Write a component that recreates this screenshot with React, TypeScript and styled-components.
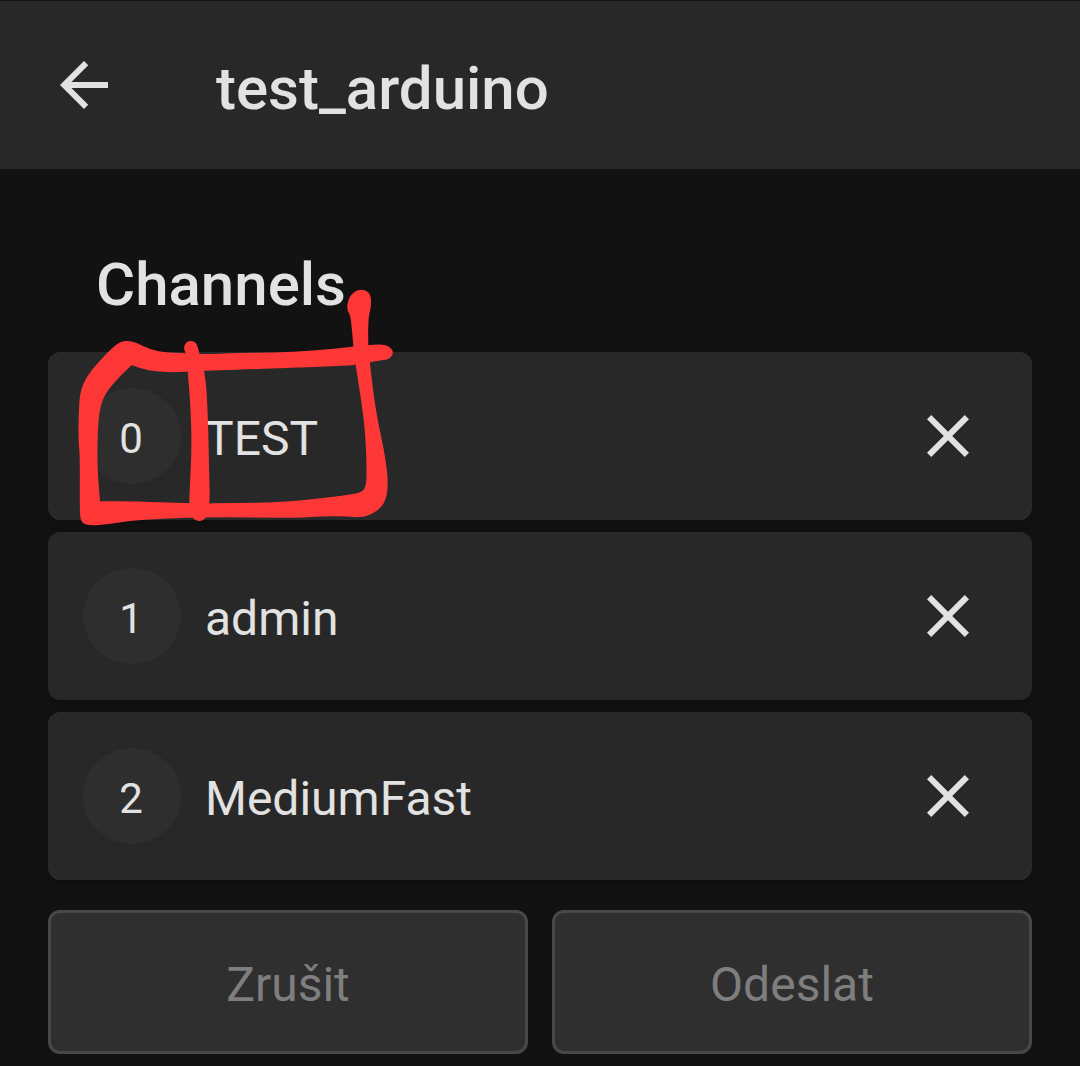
import React from 'react';
import styled, { createGlobalStyle } from 'styled-components';

const GlobalStyle = createGlobalStyle`
  *, *::before, *::after { box-sizing: border-box; }
  html { background: #121212; }
  body {
    margin: 0;
    background: #121212;
    color: #e2e2e2;
    font-family: Roboto, 'Noto Sans', sans-serif;
  }
`;

const TopBar = styled.header`
  display: flex;
  align-items: center;
  gap: 96px;
  height: 169px;
  padding: 0 48px;
  background: #282828;
  border-top: 1px solid #151515;
`;

const IconButton = styled.button`
  display: flex;
  flex: none;
  padding: 0;
  border: 0;
  background: none;
  color: inherit;
  cursor: pointer;
`;

const Icon = styled.svg`
  width: 72px;
  height: 72px;
  fill: currentColor;
`;

const Title = styled.h1`
  margin: 0;
  padding-top: 8px;
  font-size: 60px;
  font-weight: 500;
  line-height: 72px;
`;

const Content = styled.main`
  position: relative;
  padding: 80px 48px 12px;
`;

const Heading = styled.h2`
  margin: 0 0 31px;
  padding: 0 48px;
  font-size: 60px;
  font-weight: 500;
  line-height: 72px;
`;

const ChannelList = styled.ul`
  display: flex;
  flex-direction: column;
  gap: 12px;
  margin: 0;
  padding: 0;
  list-style: none;
`;

const ChannelCard = styled.li`
  display: flex;
  align-items: center;
  gap: 24px;
  height: 168px;
  padding: 0 48px 0 35px;
  border-radius: 12px;
  background: #282828;
  box-shadow: 0 3px 9px rgba(0, 0, 0, 0.25);
`;

const Badge = styled.span`
  display: flex;
  flex: none;
  align-items: center;
  justify-content: center;
  width: 98px;
  height: 96px;
  padding: 6px 2px 0 0;
  border-radius: 50%;
  background: #2e2e2e;
  font-size: 42px;
  line-height: 60px;
`;

const ChannelName = styled.span`
  flex: 1;
  min-width: 0;
  padding-top: 6px;
  font-size: 48px;
  line-height: 72px;
`;

const Actions = styled.div`
  display: grid;
  grid-template-columns: 1fr 1fr;
  gap: 24px;
  margin-top: 30px;
`;

const ActionButton = styled.button`
  height: 144px;
  padding: 6px 24px 0;
  border: 3px solid #484848;
  border-radius: 12px;
  background: #2f2f2f;
  color: #7e7e7e;
  font-family: inherit;
  font-size: 48px;
  line-height: 72px;
`;

const Scribble = styled.svg`
  position: absolute;
  top: 71px;
  left: 40px;
  width: 380px;
  height: 300px;
  fill: #ff3737;
  pointer-events: none;
`;

type Point = [number, number];

/* Closed curve through the midpoints of the outline; a repeated point gives a sharp corner. */
function smooth(points: Point[]): string {
  const mid = (a: Point, b: Point) => `${(a[0] + b[0]) / 2} ${(a[1] + b[1]) / 2}`;
  const n = points.length;
  let d = `M${mid(points[n - 1], points[0])}`;
  points.forEach((p, i) => {
    d += `Q${p[0]} ${p[1]} ${mid(p, points[(i + 1) % n])}`;
  });
  return d + 'Z';
}

const frame: Point[] = [
  [115, 600], [116, 520], [120, 455], [140, 410], [175, 366], [230, 310], [255, 302], [285, 306],
  [330, 328], [370, 336], [440, 340], [480, 343], [590, 339], [700, 338], [820, 333], [940, 320],
  [1020, 312], [1048, 318], [1062, 338], [1048, 358], [1022, 361], [990, 367], [947, 376], [800, 382],
  [680, 386], [490, 393], [380, 398], [320, 390], [275, 376], [275, 376], [240, 408], [195, 460],
  [178, 510], [173, 580], [172, 650], [174, 710], [180, 784], [180, 784], [280, 783], [447, 791],
  [600, 789], [700, 788], [800, 780], [910, 767], [975, 756], [1010, 780], [990, 828], [945, 833],
  [925, 828], [840, 829], [760, 834], [510, 831], [300, 839], [200, 853], [155, 857], [122, 850],
  [119, 805], [120, 650],
];

const rightStroke: Point[] = [
  [940, 320], [936, 270], [931, 225], [919, 205], [929, 165], [960, 145], [992, 158], [994, 200],
  [985, 230], [984, 315], [990, 370], [1000, 460], [1013, 540], [1038, 660], [1045, 740], [1035, 790],
  [1000, 822], [950, 834], [910, 815], [920, 766], [965, 758], [979, 738], [980, 680], [976, 580],
  [965, 490], [954, 420], [947, 376],
];

const divider: Point[] = [
  [441, 348], [430, 325], [438, 306], [455, 302], [470, 308], [480, 348], [493, 393], [500, 450],
  [505, 570], [507, 680], [510, 790], [500, 834], [478, 846], [452, 832], [447, 795], [451, 710],
  [455, 620], [452, 500], [443, 395],
];

const channels = ['TEST', 'admin', 'MediumFast'];

export default function App() {
  return (
    <>
      <GlobalStyle />
      <TopBar>
        <IconButton type="button" aria-label="Back">
          <Icon viewBox="0 0 24 24" aria-hidden="true">
            <path d="M20 11H7.83l5.59-5.59L12 4l-8 8 8 8 1.41-1.41L7.83 13H20v-2z" />
          </Icon>
        </IconButton>
        <Title>test_arduino</Title>
      </TopBar>
      <Content>
        <Heading>Channels</Heading>
        <ChannelList>
          {channels.map((name, index) => (
            <ChannelCard key={name}>
              <Badge>{index}</Badge>
              <ChannelName>{name}</ChannelName>
              <IconButton type="button" aria-label={`Remove ${name}`}>
                <Icon viewBox="0 0 24 24" aria-hidden="true">
                  <path d="M19 6.41L17.59 5 12 10.59 6.41 5 5 6.41 10.59 12 5 17.59 6.41 19 12 13.41 17.59 19 19 17.59 13.41 12z" />
                </Icon>
              </IconButton>
            </ChannelCard>
          ))}
        </ChannelList>
        <Actions>
          <ActionButton type="button" disabled>Zrušit</ActionButton>
          <ActionButton type="button" disabled>Odeslat</ActionButton>
        </Actions>
        <Scribble viewBox="0 0 1140 900" aria-hidden="true">
          <path d={smooth(frame)} />
          <path d={smooth(rightStroke)} />
          <path d={smooth(divider)} />
        </Scribble>
      </Content>
    </>
  );
}
